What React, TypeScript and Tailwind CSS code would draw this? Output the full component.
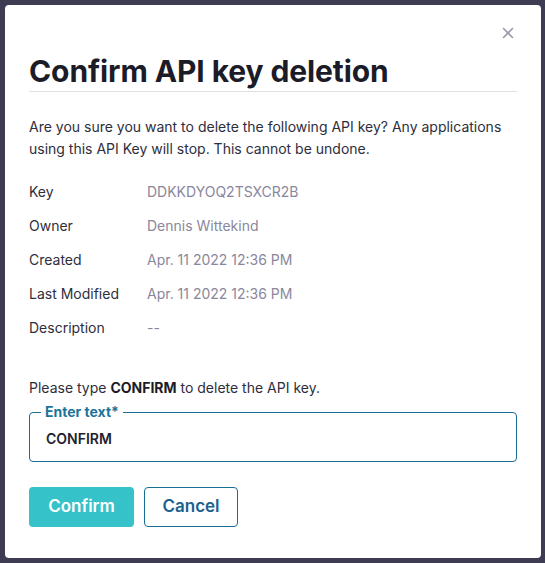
import React from "react";

export default function App() {
  const rows: [string, string][] = [
    ["Key", "DDKKDYOQ2TSXCR2B"],
    ["Owner", "Dennis Wittekind"],
    ["Created", "Apr. 11 2022 12:36 PM"],
    ["Last Modified", "Apr. 11 2022 12:36 PM"],
    ["Description", "--"],
  ];
  return (
    <div
      className="w-[545px] h-[563px] bg-[#3d3c52] p-[5px] pr-[4px] pb-[5px]"
      style={{ fontFamily: "Inter, 'Noto Sans', sans-serif" }}
    >
      <div className="relative bg-white rounded-[4px] h-[553px] w-[536px] px-[24px] pt-[48px]">
        <button className="absolute right-[27px] top-[22px] text-[#9b9bab]">
          <svg width="12" height="12" viewBox="0 0 12 12" stroke="currentColor" strokeWidth="1.6" fill="none">
            <path d="M1 1 L11 11 M11 1 L1 11" />
          </svg>
        </button>
        <h1 className="text-[30px] leading-[36px] font-bold text-[#1c1c28] tracking-[-0.1px]">
          Confirm API key deletion
        </h1>
        <div className="h-px bg-[#e0e0e4] mt-[2px]" />
        <p className="mt-[24px] text-[14px] leading-[22px] text-[#2e2e3c]">
          Are you sure you want to delete the following API key? Any applications using this API Key will stop. This cannot be undone.
        </p>
        <div className="mt-[22px] flex flex-col gap-[14px]">
          {rows.map(([k, v]) => (
            <div key={k} className="flex text-[14px] leading-[20px]">
              <div className="w-[118px] text-[#2e2e3c]">{k}</div>
              <div className="text-[#8a879c]">{v}</div>
            </div>
          ))}
        </div>
        <p className="mt-[40px] text-[14px] leading-[20px] text-[#2e2e3c]">
          Please type <span className="font-bold text-[#1c1c28]">CONFIRM</span> to delete the API key.
        </p>
        <fieldset className="mt-[7px] border border-[#1a6e94] rounded-[4px] h-[57px] px-[11px] pt-0">
          <legend className="px-[4px] text-[14px] leading-[14px] font-bold text-[#1a7599]">Enter text*</legend>
          <div className="pt-[9px] text-[14px] font-semibold text-[#22222e] pl-[5px]">CONFIRM</div>
        </fieldset>
        <div className="mt-[25px] flex gap-[10px]">
          <button className="h-[40px] w-[105px] rounded-[4px] bg-[#35c2c9] text-white text-[17px] font-semibold">
            Confirm
          </button>
          <button className="h-[40px] w-[94px] rounded-[4px] border border-[#1a6e94] text-[#1a6190] text-[17px] font-semibold bg-white">
            Cancel
          </button>
        </div>
      </div>
    </div>
  );
}
